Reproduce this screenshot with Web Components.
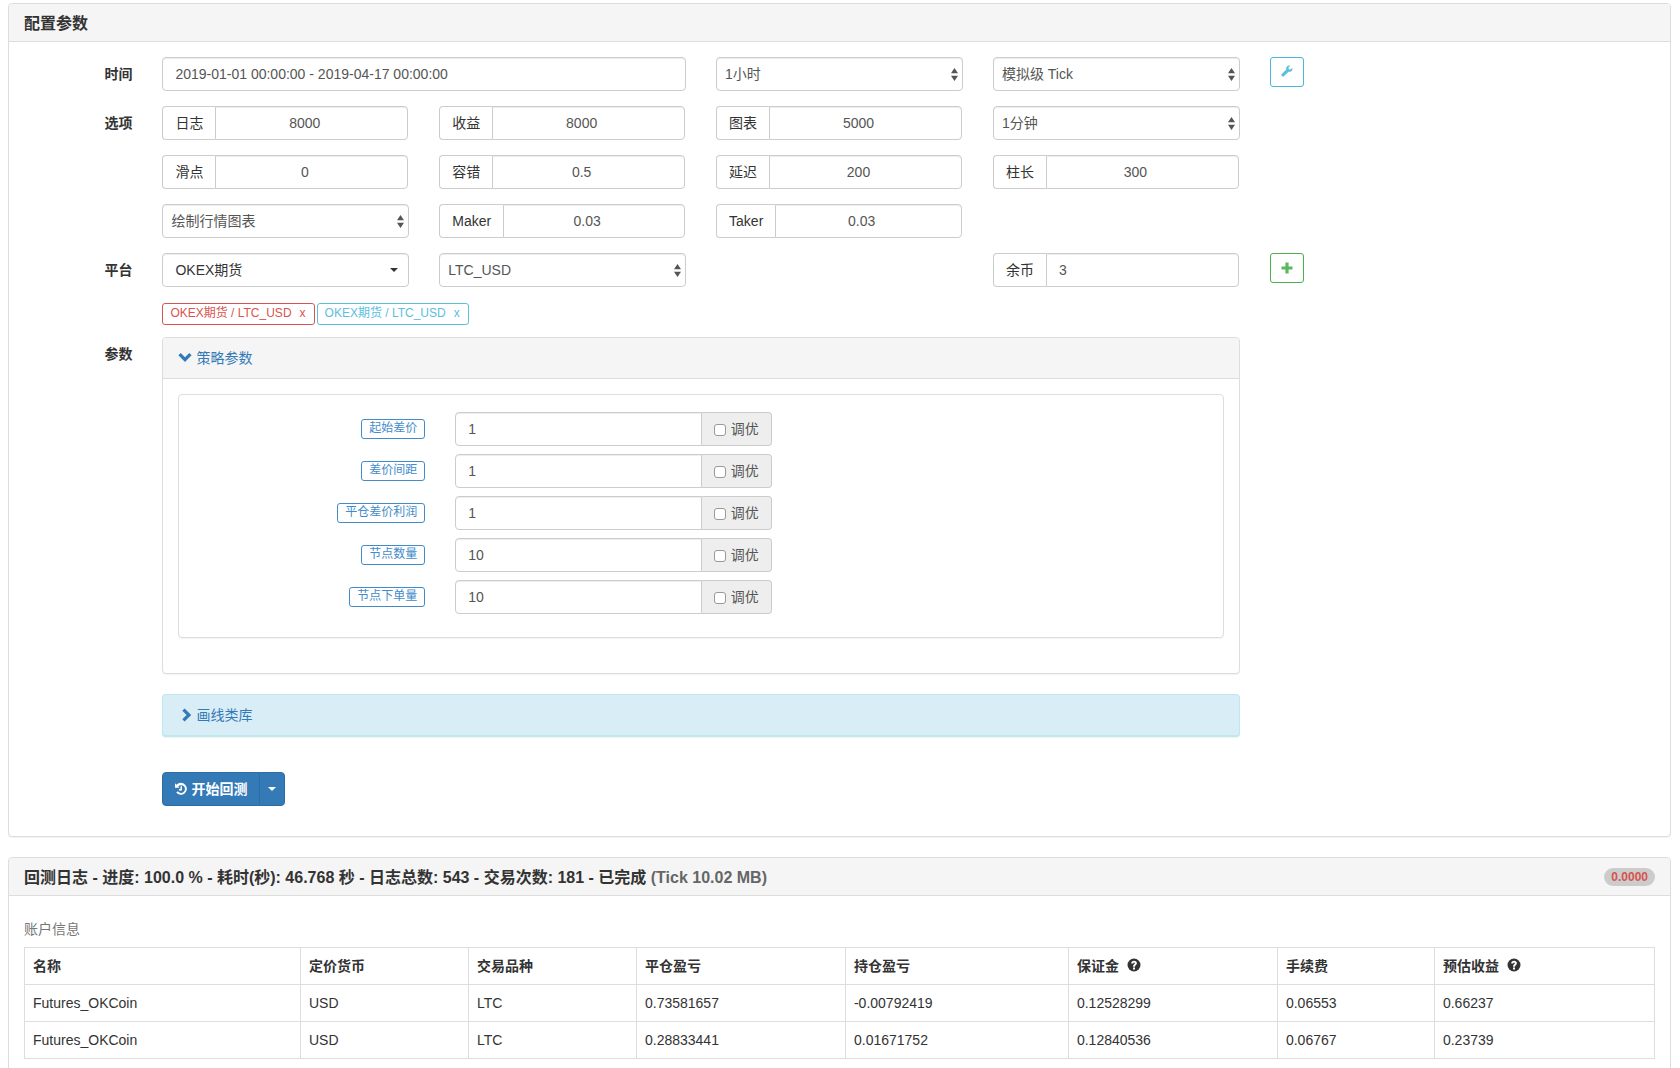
<!DOCTYPE html>
<html lang="zh-CN">
<head>
<meta charset="utf-8">
<title>回测</title>
<style>
  body {
    margin: 0;
    padding: 3px 9px 20px 8px;
    background: #fff;
    color: #333;
    font: 14px/20px "Liberation Sans", "Noto Sans CJK SC", sans-serif;
  }
</style>
</head>
<body>
<backtest-page></backtest-page>

<script>
const define = (name, css, html) => {
  customElements.define(name, class extends HTMLElement {
    connectedCallback() {
      if (this.shadowRoot) return;
      const attr = key => this.getAttribute(key) || '';
      const root = this.attachShadow({ mode: 'open' });
      root.innerHTML = `<style>*{box-sizing:border-box}:host{display:block;box-sizing:border-box}${css}</style>` +
        (typeof html === 'function' ? html(attr) : html);
    }
  });
};

const FIELD = `
  input, select, button.field {
    width: 100%; min-width: 0; height: 34px; margin: 0; padding: 6px 12px;
    border: 1px solid #ccc; border-radius: 4px; background: #fff; color: #555;
    font: inherit; box-shadow: inset 0 1px 1px rgba(0,0,0,.075); outline: 0;
  }`;

const ICONS = {
  wrench: ['0 0 14 14', '<path d="M13.2 3.1 11 5.2 9 4.900 8.700 3 10.900.8C9.500.3 7.900.6 6.900 1.700 6 2.600 5.800 4 6.200 5.200L.9 10.600c-.6.6-.6 1.500 0 2.100l.4.4c.6.6 1.500.6 2.100 0L8.800 7.800c1.200.4 2.600.2 3.500-.8 1-1 1.300-2.500.9-3.900z"/>'],
  plus: ['0 0 14 14', '<path d="M5.400 1.500h3.200v3.900h3.900v3.200H8.600v3.900H5.400V8.600H1.500V5.400h3.900z"/>'],
  down: ['0 0 14 14', '<path d="M2.700 2 7 6.300 11.300 2l2.300 2.300L7 10.900.4 4.300z"/>'],
  right: ['0 0 14 14', '<path d="M6.600.4 13.200 7l-6.600 6.600-2.300-2.300L8.600 7 4.300 2.700z"/>'],
  history: ['0 0 12 14', '<path d="M0 1.200v4.600h4.600L3.200 4.400A3.900 3.900 0 1 1 2.900 9.300L1.200 10.600A6 6 0 1 0 1.500 2.700z"/><path d="M5.500 4.300h1.500v4.100H4V7h1.500z"/>'],
  question: ['0 0 14 14', '<circle cx="7" cy="7" r="6.500"/><path fill="#fff" d="M6 9.500h2v2H6zM4.200 5.400C4.200 3.600 5.400 2.700 7.100 2.700c1.600 0 2.800.9 2.800 2.400 0 2-1.900 2-1.900 3.600H6c0-2.300 1.800-2.500 1.800-3.500 0-.4-.3-.7-.8-.7s-.8.3-.8.900z"/>'],
  caret: ['0 0 8 4', '<path d="M0 0h8L4 4z"/>'],
  updown: ['0 0 7 13', '<path d="M3.500 0 7 5.300H0zM0 7.700h7L3.500 13z"/>']
};
define('ui-icon', `
  :host { display: inline-block; line-height: 0; flex: none; }
  svg { display: block; width: var(--w, 14px); height: var(--h, 14px); fill: currentColor; }`,
  a => { const [box, body] = ICONS[a('name')]; return `<svg viewBox="${box}" aria-hidden="true">${body}</svg>`; });

define('ui-panel', `
  :host { border: 1px solid #ddd; border-radius: 4px; background: #fff; box-shadow: 0 1px 1px rgba(0,0,0,.05); }
  header { display: flex; justify-content: space-between; align-items: center; padding: 10px 15px;
    border-bottom: 1px solid #ddd; border-radius: 3px 3px 0 0; background: #f5f5f5; }
  .body { padding: 15px; }`,
  `<header><slot name="title"></slot><slot name="extra"></slot></header><div class="body"><slot></slot></div>`);

define('form-row', `
  :host { display: grid; grid-template-columns: repeat(12, minmax(0, 1fr)); column-gap: 30px; margin-bottom: 15px; }
  .name { padding-top: 7px; text-align: right; font-weight: 700; }
  ::slotted(*) { grid-column: span 2; }
  ::slotted(.wide4) { grid-column: span 4; }
  ::slotted(.wide8) { grid-column: span 8; }`,
  a => `<div class="name">${a('label')}</div><slot></slot>`);

define('text-field', FIELD, a => `<input type="text" aria-label="${a('label')}" value="${a('value')}">`);

define('addon-field', `${FIELD}
  :host { display: flex; padding-right: 1px; }
  label { flex: none; height: 34px; padding: 6px 12px; border: 1px solid #ccc; border-right: 0; border-radius: 4px 0 0 4px; }
  input { flex: 1; padding-right: 26px; border-radius: 0 4px 4px 0; text-align: center; }
  :host([left]) input { text-align: left; }`,
  a => `<label for="f">${a('label')}</label><input id="f" type="text" inputmode="decimal" value="${a('value')}">`);

define('select-field', `${FIELD}
  :host { display: grid; align-items: center; }
  select, ui-icon { grid-area: 1 / 1; }
  select { appearance: none; padding: 6px 24px 6px 8px; }
  ui-icon { justify-self: end; margin-right: 5px; color: #555; pointer-events: none; --w: 7px; --h: 13px; }`,
  a => `<select aria-label="${a('label')}"><option>${a('value')}</option></select><ui-icon name="updown"></ui-icon>`);

define('dropdown-field', `${FIELD}
  button.field { display: flex; align-items: center; justify-content: space-between; padding: 0 10px 0 12px; color: #333; }
  ui-icon { --w: 8px; --h: 4px; }`,
  a => `<button class="field" type="button" aria-haspopup="listbox"><span>${a('value')}</span><ui-icon name="caret"></ui-icon></button>`);

define('icon-button', `
  button { display: flex; align-items: center; justify-content: center; width: 34px; height: 30px; padding: 0 0 2px;
    border: 1px solid; border-radius: 3px; background: #fff; color: #46b8da; }
  :host([kind=add]) button { padding: 0; color: #4cae4c; }
  ui-icon { --w: 12px; --h: 12px; color: #5bc0de; }
  :host([kind=add]) ui-icon { color: #5cb85c; --w: 14px; --h: 14px; }`,
  a => `<button type="button" aria-label="${a('label')}"><ui-icon name="${a('icon')}"></ui-icon></button>`);

define('pair-tag', `
  :host { display: inline-flex; align-items: flex-start; height: 22px; padding: 0 6px 0 7px; border: 1px solid; border-radius: 3px;
    font-size: 12px; line-height: 18px; color: #5bc0de; }
  :host([active]) { color: #d9534f; }
  button { margin: 0 0 0 6px; padding: 0 2px; border: 0; background: none; color: inherit; font: inherit; }`,
  `<span><slot></slot></span><button type="button" aria-label="x">x</button>`);

define('tune-row', `${FIELD}
  :host { display: grid; grid-template-columns: repeat(12, minmax(0, 1fr)); column-gap: 30px; margin-bottom: 8px; }
  .name { grid-column: span 3; display: flex; justify-content: flex-end; align-items: flex-start; padding-top: 7px; }
  .name label { height: 20px; padding: 0 7px; border: 1px solid #428bca; border-radius: 3px; color: #428bca; font-size: 12px; line-height: 17px; }
  .group { grid-column: span 4; display: flex; }
  #v { flex: 1; border-radius: 4px 0 0 4px; }
  .tune { flex: none; display: flex; align-items: center; gap: 5px; padding: 0 12px; border: 1px solid #ccc; border-left: 0;
    border-radius: 0 4px 4px 0; background: #eee; color: #555; }
  .tune input { appearance: none; width: 12px; height: 12px; margin-top: 2px; padding: 0; border: 1px solid #999; border-radius: 3px; box-shadow: none; }`,
  a => `<div class="name"><label for="v">${a('label')}</label></div>
    <div class="group"><input id="v" type="text" value="${a('value')}"><label class="tune"><input type="checkbox">调优</label></div>`);

define('strategy-params', `
  a { display: flex; align-items: center; gap: 4px; color: #337ab7; text-decoration: none; }
  .box { padding: 17px 18px 15px 16px; margin-bottom: 20px; border: 1px solid #ddd; border-radius: 4px; box-shadow: 0 1px 1px rgba(0,0,0,.05); }`,
  `<ui-panel>
    <a slot="title" href="#params"><ui-icon name="down"></ui-icon>策略参数</a>
    <div class="box" id="params">
      <tune-row label="起始差价" value="1"></tune-row>
      <tune-row label="差价间距" value="1"></tune-row>
      <tune-row label="平仓差价利润" value="1"></tune-row>
      <tune-row label="节点数量" value="10"></tune-row>
      <tune-row label="节点下单量" value="10"></tune-row>
    </div>
  </ui-panel>`);

define('library-bar', `
  :host { margin-top: 20px; padding: 10px 15px; border: 1px solid #bce8f1; border-bottom-width: 2px; border-radius: 4px; background: #d9edf7; box-shadow: 0 1px 1px rgba(0,0,0,.05); }
  a { display: flex; align-items: center; gap: 4px; color: #337ab7; text-decoration: none; }`,
  `<a href="#library"><ui-icon name="right"></ui-icon><slot></slot></a>`);

define('run-button', `
  :host { display: flex; }
  button { display: flex; align-items: center; gap: 4px; height: 34px; margin: 0; padding: 0 12px; border: 1px solid #2e6da4;
    border-radius: 4px 0 0 4px; background: #337ab7; color: #fff; font: inherit; font-weight: 700; }
  button + button { margin-left: -1px; padding: 0 8px; border-radius: 0 4px 4px 0; --w: 8px; --h: 4px; }
  .main { --w: 12px; }`,
  `<button class="main" type="button"><ui-icon name="history"></ui-icon><slot></slot></button><button type="button" aria-label="更多"><ui-icon name="caret"></ui-icon></button>`);

define('count-badge', `
  :host { margin: -1px 0; padding: 3px 7px; border-radius: 10px; background: #ccc; color: #d9534f; font-size: 12px; line-height: 12px; font-weight: 700; }`,
  `<slot></slot>`);

const ACCOUNTS = [
  ['Futures_OKCoin', 'USD', 'LTC', '0.73581657', '-0.00792419', '0.12528299', '0.06553', '0.66237'],
  ['Futures_OKCoin', 'USD', 'LTC', '0.28833441', '0.01671752', '0.12840536', '0.06767', '0.23739']
];
const COLUMNS = [['名称', 276], ['定价货币', 168], ['交易品种', 168], ['平仓盈亏', 209], ['持仓盈亏', 223], ['保证金', 209, 1], ['手续费', 157], ['预估收益', 220, 1]];
const TOTAL = COLUMNS.reduce((sum, c) => sum + c[1], 0);
define('account-table', `
  table { width: 100%; table-layout: fixed; border-collapse: collapse; }
  caption { padding: 8px 0; color: #777; text-align: left; }
  th, td { padding: 8px; border: 1px solid #ddd; text-align: left; }
  th { font-weight: 700; }
  ui-icon { margin-left: 8px; vertical-align: -1px; }`,
  () => `<table><caption>账户信息</caption>
    <colgroup>${COLUMNS.map(c => `<col style="width:${c[1] / TOTAL * 100}%">`).join('')}</colgroup>
    <thead><tr>${COLUMNS.map(c => `<th>${c[0]}${c[2] ? '<ui-icon name="question"></ui-icon>' : ''}</th>`).join('')}</tr></thead>
    <tbody>${ACCOUNTS.map(r => `<tr>${r.map(v => `<td>${v}</td>`).join('')}</tr>`).join('')}</tbody></table>`);

define('backtest-page', `
  :host { display: flex; flex-direction: column; gap: 20px; }
  h2 { margin: 0; padding-top: 2px; font-size: 16px; line-height: 15px; font-weight: 700; }
  h2 small { font-size: 16px; line-height: 15px; color: #666; }
  .tags { display: flex; gap: 2px; padding-top: 1px; }
  form-row.tagrow { margin-bottom: 12px; }
  form-row.run { margin: 35px 0 15px; }`,
  `<ui-panel>
    <h2 slot="title">配置参数</h2>
    <form-row label="时间">
      <text-field class="wide4" label="时间" value="2019-01-01 00:00:00 - 2019-04-17 00:00:00"></text-field>
      <select-field label="周期" value="1小时"></select-field>
      <select-field label="模式" value="模拟级 Tick"></select-field>
      <icon-button icon="wrench" label="设置"></icon-button>
    </form-row>
    <form-row label="选项">
      <addon-field label="日志" value="8000"></addon-field>
      <addon-field label="收益" value="8000"></addon-field>
      <addon-field label="图表" value="5000"></addon-field>
      <select-field label="底层周期" value="1分钟"></select-field>
    </form-row>
    <form-row>
      <addon-field label="滑点" value="0"></addon-field>
      <addon-field label="容错" value="0.5"></addon-field>
      <addon-field label="延迟" value="200"></addon-field>
      <addon-field label="柱长" value="300"></addon-field>
    </form-row>
    <form-row>
      <select-field label="图表" value="绘制行情图表"></select-field>
      <addon-field label="Maker" value="0.03"></addon-field>
      <addon-field label="Taker" value="0.03"></addon-field>
    </form-row>
    <form-row label="平台">
      <dropdown-field value="OKEX期货"></dropdown-field>
      <select-field label="交易对" value="LTC_USD"></select-field>
      <span></span>
      <addon-field left label="余币" value="3"></addon-field>
      <icon-button kind="add" icon="plus" label="添加"></icon-button>
    </form-row>
    <form-row class="tagrow">
      <div class="tags wide8"><pair-tag active>OKEX期货 / LTC_USD</pair-tag><pair-tag>OKEX期货 / LTC_USD</pair-tag></div>
    </form-row>
    <form-row label="参数">
      <div class="wide8"><strategy-params></strategy-params><library-bar>画线类库</library-bar></div>
    </form-row>
    <form-row class="run"><run-button class="wide4">开始回测</run-button></form-row>
  </ui-panel>
  <ui-panel>
    <h2 slot="title">回测日志 - 进度: 100.0 % - 耗时(秒): 46.768 秒 - 日志总数: 543 - 交易次数: 181 - 已完成 <small>(Tick 10.02 MB)</small></h2>
    <count-badge slot="extra">0.0000</count-badge>
    <account-table></account-table>
  </ui-panel>`);
</script>
</body>
</html>
